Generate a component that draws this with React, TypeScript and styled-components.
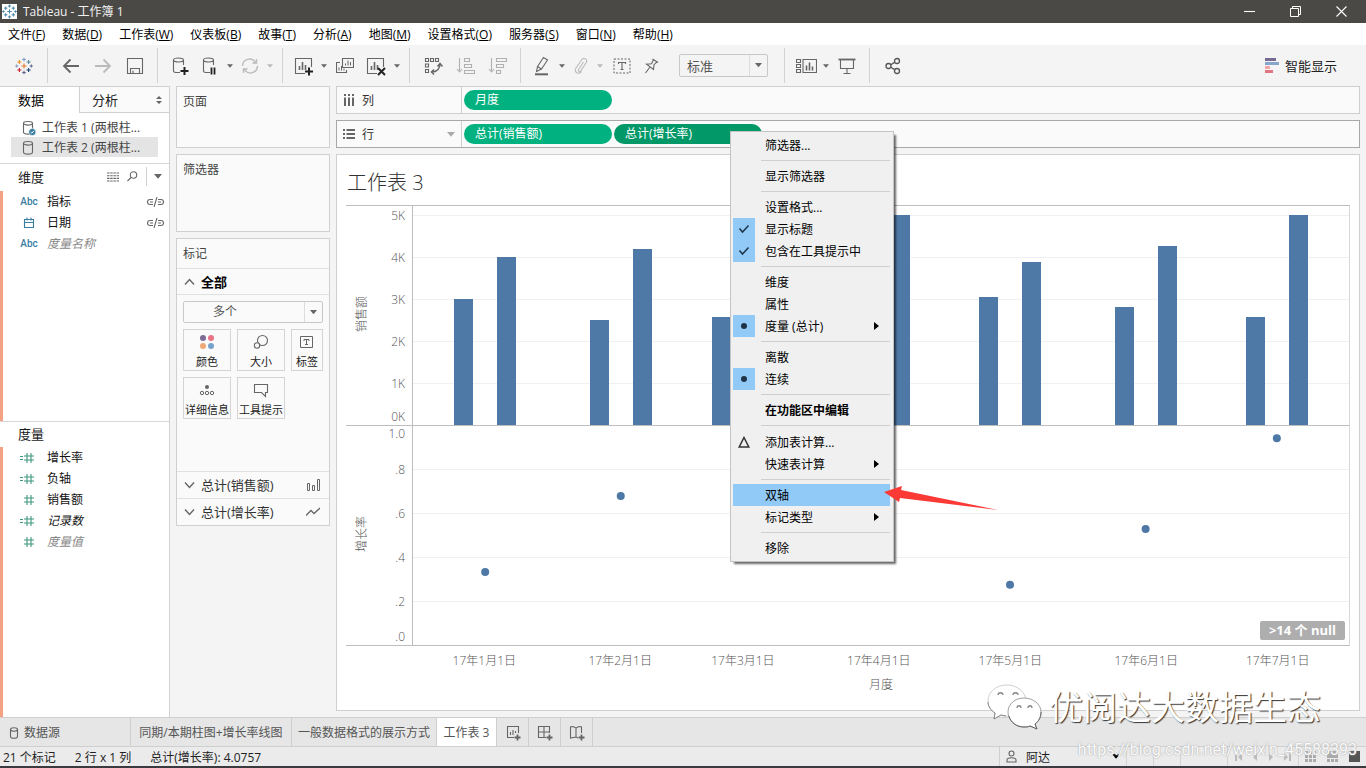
import React from "react";
import styled, { createGlobalStyle, css } from "styled-components";

const Global = createGlobalStyle`
  * { box-sizing: border-box; }
  body { margin: 0; background: #f4f4f4; }
  body, button, select {
    font-family: "Open Sans", "Noto Sans CJK SC", sans-serif;
    font-size: 12px;
    line-height: 20px;
    color: #1a1a1a;
  }
  button { padding: 0; margin: 0; border: 0; background: none; text-align: left; }
  ul { list-style: none; margin: 0; padding: 0; }
  h1, h2, h3 { margin: 0; font-weight: 400; }
  svg { display: block; flex: none; }
`;

/* ---------- frame ---------- */
const Page = styled.div`
  position: relative;
  display: flex;
  flex-direction: column;
  min-height: 100vh;
  overflow: hidden;
`;
const TitleBar = styled.header`
  display: flex;
  align-items: center;
  height: 23px;
  padding: 0 2px;
  background: #4a4946;
  color: #f2f2f2;
`;
const AppTitle = styled.h1`
  flex: 1;
  margin-left: 6px;
  font-size: 12px;
`;
const WindowButton = styled.button`
  display: flex;
  justify-content: center;
  width: 46px;
  color: #fff;
`;
const MenuBar = styled.nav`
  display: flex;
  gap: 17px;
  height: 22px;
  padding-left: 8px;
  background: #fff;
  button { padding-top: 2px; color: #000; white-space: nowrap; }
`;
const Toolbar = styled.div`
  display: flex;
  align-items: center;
  height: 41px;
`;
const ToolGroup = styled.div`
  display: flex;
  align-items: center;
  gap: 3px;
  height: 35px;
  padding: 0 8px;
  border-right: 1px solid #d2d2d2;
  &:last-of-type { border-right: 0; }
`;
const Tool = styled.button<{ $w: number }>`
  display: flex;
  align-items: center;
  justify-content: center;
  width: ${(p) => p.$w}px;
  height: 28px;
`;
const SmartShow = styled.button`
  display: flex;
  align-items: center;
  gap: 6px;
  margin-left: auto;
  margin-right: 29px;
  font-size: 13px;
  color: #222;
`;
const Main = styled.main`
  flex: 1;
  display: flex;
  gap: 6px;
  padding-right: 6px;
`;

/* ---------- drop-downs ---------- */
const SelectBox = styled.span<{ $w?: number; $indent: number }>`
  position: relative;
  display: flex;
  width: ${(p) => (p.$w ? p.$w + "px" : "100%")};
  height: ${(p) => (p.$w ? 23 : 22)}px;
  margin-left: ${(p) => (p.$w ? 12 : 0)}px;
  margin-right: ${(p) => (p.$w ? 8 : 0)}px;
  border: 1px solid #c8c8c8;
  border-radius: 2px;
  select {
    appearance: none;
    flex: 1;
    min-width: 0;
    border: 0;
    padding: 0 0 0 ${(p) => p.$indent}px;
    background: transparent;
    font-size: ${(p) => (p.$w ? 13 : 12)}px;
    color: #555;
  }
`;
const SelectCaret = styled.span`
  position: absolute;
  top: 0;
  bottom: 0;
  right: 0;
  display: flex;
  align-items: center;
  justify-content: center;
  width: 18px;
  border-left: 1px solid #ddd;
  pointer-events: none;
`;

/* ---------- data pane ---------- */
const DataPane = styled.aside`
  display: flex;
  flex-direction: column;
  width: 170px;
  flex: none;
  background: #fff;
  border-top: 1px solid #d0d0d0;
  border-right: 1px solid #d0d0d0;
`;
const PaneTabs = styled.div`
  display: flex;
  height: 26px;
`;
const PaneTab = styled.button<{ $active?: boolean }>`
  display: flex;
  align-items: center;
  justify-content: space-between;
  font-size: 13px;
  width: ${(p) => (p.$active ? "79px" : "auto")};
  flex: ${(p) => (p.$active ? "none" : 1)};
  padding: 0 7px 0 ${(p) => (p.$active ? 18 : 12)}px;
  color: ${(p) => (p.$active ? "#000" : "#222")};
  ${(p) =>
    !p.$active &&
    css`
      background: #fafafa;
      border-left: 1px solid #d0d0d0;
      border-bottom: 1px solid #d0d0d0;
    `}
`;
const Sources = styled.ul`
  padding: 4px 11px 6px;
  border-bottom: 1px solid #d8d8d8;
`;
const Source = styled.li<{ $on?: boolean }>`
  button {
    display: flex;
    align-items: center;
    gap: 5px;
    width: 100%;
    height: 20px;
    padding: 2px 0 0 10px;
    white-space: nowrap;
    color: #444;
    background: ${(p) => (p.$on ? "#e4e4e4" : "transparent")};
  }
`;
const FieldSection = styled.section<{ $grow?: boolean }>`
  display: flex;
  flex-direction: column;
  ${(p) =>
    p.$grow
      ? css`
          flex: 1;
        `
      : css`
          height: 258px;
          border-bottom: 1px solid #d8d8d8;
        `}
`;
const SectionHead = styled.div<{ $h: number }>`
  display: flex;
  align-items: center;
  height: ${(p) => p.$h}px;
  padding: 0 0 2px 18px;
  h2 { flex: 1; font-size: 13px; }
`;
const HeadTools = styled.div`
  display: flex;
  align-items: center;
  button { padding: 4px; }
  button:last-child { margin-left: 4px; padding: 7px; border-left: 1px solid #d0d0d0; }
`;
const Fields = styled.ul`
  flex: 1;
  border-left: 3px solid #f4a184;
`;
const Field = styled.li<{ $dim?: boolean; $italic?: boolean }>`
  display: grid;
  grid-template-columns: 20px 1fr auto;
  column-gap: 8px;
  align-items: center;
  height: 21px;
  padding: 0 5px 0 16px;
  color: ${(p) => (p.$dim ? "#888" : "#111")};
  font-style: ${(p) => (p.$italic ? "italic" : "normal")};
  > :first-child { justify-self: center; }
`;
const Abc = styled.span`
  font-family: Roboto, sans-serif;
  font-size: 10px;
  font-weight: 500;
  font-style: normal;
  color: #3a7da2;
`;

/* ---------- cards ---------- */
const Cards = styled.div`
  display: flex;
  flex-direction: column;
  gap: 6px;
  width: 154px;
  flex: none;
`;
const Card = styled.section<{ $h: number }>`
  min-height: ${(p) => p.$h}px;
  border: 1px solid #d0d0d0;
  background: #fafafa;
  > h2 {
    height: 29px;
    padding: 5px 6px;
    font-size: 12px;
    color: #444;
  }
`;
const MarkRow = styled.button<{ $bold?: boolean }>`
  display: flex;
  align-items: center;
  gap: 6px;
  width: 100%;
  height: 27px;
  padding: 0 9px 0 7px;
  border-top: 1px solid #e0e0e0;
  border-bottom: ${(p) => (p.$bold ? "1px solid #e0e0e0" : "0")};
  font-size: 13px;
  font-weight: ${(p) => (p.$bold ? 700 : 400)};
  color: ${(p) => (p.$bold ? "#000" : "#333")};
  span { flex: 1; }
`;
const MarksBody = styled.div`
  height: 176px;
  padding: 6px;
`;
const MarkGrid = styled.div`
  display: grid;
  grid-template-columns: 48px 48px 32px;
  gap: 6px;
  margin-top: 6px;
`;
const MarkButton = styled.button`
  display: flex;
  flex-direction: column;
  align-items: center;
  justify-content: space-between;
  height: 42px;
  padding-top: 4px;
  border: 1px solid #d4d4d4;
  color: #222;
  white-space: nowrap;
  line-height: 17px;
  font-size: 11px;
`;

/* ---------- shelves ---------- */
const Work = styled.div`
  flex: 1;
  min-width: 0;
  display: flex;
  flex-direction: column;
  gap: 6px;
  padding-bottom: 6px;
`;
const Shelf = styled.div<{ $focus?: boolean }>`
  display: flex;
  height: 28px;
  border: 1px solid ${(p) => (p.$focus ? "#a8a8a8" : "#cfcfcf")};
  background: #fafafa;
`;
const ShelfLabel = styled.div`
  display: flex;
  align-items: center;
  gap: 7px;
  width: 125px;
  flex: none;
  padding: 0 6px;
  border-right: 1px solid #cfcfcf;
  color: #333;
  span { flex: 1; padding-top: 1px; }
`;
const Pills = styled.div`
  display: flex;
  gap: 2px;
  padding: 3px 2px;
`;
const PillSlot = styled.div`
  position: relative;
`;
const Pill = styled.button<{ $on?: boolean }>`
  display: block;
  width: 148px;
  height: 20px;
  padding: 0 11px;
  border-radius: 10px;
  color: #fff;
  background: ${(p) => (p.$on ? "#029868" : "#02b180")};
`;

/* ---------- context menu ---------- */
const Menu = styled.div`
  position: absolute;
  left: 116px;
  top: 7px;
  z-index: 2;
  width: 164px;
  padding: 2px 3px 2px 2px;
  border: 1px solid #c4c4c4;
  background: #f0f0f0;
  box-shadow: 3px 3px 2px -1px rgba(0, 0, 0, 0.6);
`;
const MenuItem = styled.button<{ $hot?: boolean; $bold?: boolean; $tall?: boolean }>`
  display: grid;
  grid-template-columns: 22px 1fr 16px;
  column-gap: 10px;
  align-items: center;
  width: 100%;
  height: ${(p) => (p.$tall ? 23 : 22)}px;
  color: #000;
  white-space: nowrap;
  font-weight: ${(p) => (p.$bold ? 700 : 400)};
  background: ${(p) => (p.$hot ? "#91c9f7" : "transparent")};
`;
const MenuText = styled.span`
  padding-top: 2px;
`;
const MenuMark = styled.span<{ $on: boolean }>`
  display: flex;
  align-items: center;
  justify-content: center;
  height: 22px;
  background: ${(p) => (p.$on ? "#91c9f7" : "transparent")};
`;
const MenuRule = styled.hr`
  height: 1px;
  margin: 4px 0 4px 28px;
  border: 0;
  background: #cfcfcf;
`;
const Pointer = styled.svg`
  position: absolute;
  left: 270px;
  top: 360px;
  z-index: 3;
`;

/* ---------- worksheet ---------- */
const Sheet = styled.section`
  flex: 1;
  padding: 0 9px;
  border: 1px solid #cfcfcf;
  background: #fff;
  h2 {
    height: 50px;
    padding: 14px 1px 0;
    font-size: 20px;
    line-height: 28px;
    font-weight: 300;
    color: #333;
  }
`;
const Chart = styled.div`
  display: grid;
  grid-template-columns: 66px 1fr;
  border-top: 1px solid #bdbdbd;
`;
const AxisCell = styled.div`
  height: 220px;
  border-bottom: 1px solid #bdbdbd;
`;
const PlotCell = styled.div`
  position: relative;
  height: 220px;
  border-left: 1px solid #bdbdbd;
  border-right: 1px solid #d8d8d8;
  border-bottom: 1px solid #bdbdbd;
`;
const DateAxis = styled.div`
  grid-column: 2;
  height: 50px;
`;
const ChartSvg = styled.svg`
  width: 100%;
  height: 100%;
  text { font-size: 12px; font-weight: 300; fill: #555; }
  rect { shape-rendering: crispEdges; }
`;
const NullBadge = styled.button`
  position: absolute;
  right: 4px;
  bottom: 5px;
  height: 19px;
  padding: 0 9px;
  border-radius: 2px;
  background: #aeaeae;
  color: #fff;
  font-size: 13px;
  font-weight: 700;
  line-height: 19px;
`;

/* ---------- footer ---------- */
const SheetTabs = styled.div`
  display: flex;
  height: 30px;
  border-top: 1px solid #cfcfcf;
  border-bottom: 1px solid #cfcfcf;
  background: #e6e6e6;
`;
const SheetTab = styled.button<{ $w: number; $active?: boolean; $start?: boolean }>`
  display: flex;
  align-items: center;
  justify-content: ${(p) => (p.$start ? "flex-start" : "center")};
  gap: 5px;
  width: ${(p) => p.$w}px;
  padding-top: 2px;
  padding-left: ${(p) => (p.$start ? 9 : 0)}px;
  border-right: 1px solid #cfcfcf;
  white-space: nowrap;
  color: #555;
  background: ${(p) => (p.$active ? "#fff" : "transparent")};
`;
const StatusBar = styled.footer`
  display: flex;
  align-items: center;
  height: 21px;
  padding-left: 3px;
  border-bottom: 2px solid #3b3b3f;
  background: #ebebeb;
  color: #222;
`;
const StatusText = styled.span`
  padding: 2px 19px 0 0;
  white-space: nowrap;
`;
const StatusRight = styled.div`
  display: flex;
  align-self: stretch;
  margin-left: auto;
`;
const StatusCell = styled.button<{ $w: number }>`
  display: flex;
  align-items: center;
  justify-content: space-around;
  width: ${(p) => p.$w}px;
  border-left: 1px solid #d4d4d4;
`;
const UserCell = styled.button`
  display: flex;
  align-items: center;
  gap: 9px;
  width: 127px;
  padding: 0 6px;
  border-left: 1px solid #d0d0d0;
  span { flex: 1; padding-top: 2px; }
`;

/* ---------- watermarks ---------- */
const Brand = styled.div`
  position: absolute;
  right: 45px;
  bottom: 36px;
  z-index: 4;
  display: flex;
  align-items: center;
  gap: 6px;
  font-size: 34px;
  line-height: 50px;
  color: #fff;
  text-shadow: 1px 1px 1px #333;
  pointer-events: none;
`;
const Url = styled.div`
  position: absolute;
  right: 9px;
  bottom: 8px;
  z-index: 4;
  font-family: Roboto, sans-serif;
  font-size: 16px;
  color: #fafafa;
  text-shadow: 0 0 1px #aaa, 0 0 2px #bbb;
  pointer-events: none;
`;

/* ---------- icons ---------- */
const Caret = ({ c = "#666", s = 6 }: { c?: string; s?: number }) => (
  <svg width={s} height={s / 2 + 1} viewBox="0 0 8 5"><path d="M0 0h8L4 4.8z" fill={c} /></svg>
);
const plus = (x: number, y: number, r: number) => `M${x - r} ${y}h${2 * r}M${x} ${y - r}v${2 * r}`;
const Mark = ({ size, mono }: { size: number; mono?: boolean }) => {
  const parts: [number, number, number, string][] = [
    [9, 9, 2.6, "#e8762c"], [9, 2.5, 1.8, "#7b9bc0"], [9, 15.5, 1.8, "#59658f"],
    [4.4, 5, 2.1, "#eb912c"], [13.6, 5, 2.1, "#59879b"], [4.4, 13, 2.1, "#c72035"],
    [13.6, 13, 2.1, "#1f457e"], [1.7, 9, 1.5, "#7b9bc0"], [16.3, 9, 1.5, "#59658f"],
  ];
  return (
    <svg width={size} height={size} viewBox="0 0 18 18">
      {mono && <rect width="18" height="18" fill="#fff" />}
      {parts.map(([x, y, r, c], i) => (
        <path key={i} d={plus(x, y, r)} stroke={mono ? "#3d7fa5" : c} strokeWidth="1.1" />
      ))}
    </svg>
  );
};
const G = ({ w = 20, h = 20, c = "#666", sw = 1.1, children }: {
  w?: number; h?: number; c?: string; sw?: number; children: React.ReactNode;
}) => (
  <svg width={w} height={h} viewBox={`0 0 ${w} ${h}`} fill="none" stroke={c} strokeWidth={sw}>{children}</svg>
);
const Cylinder = ({ badge }: { badge?: boolean }) => (
  <G w={16} h={16}>
    <ellipse cx="7" cy="3.3" rx="4.5" ry="1.8" />
    <path d="M2.5 3.3v9c0 1 2 1.800 4.500 1.800s4.500-.8 4.500-1.800v-9" />
    {badge && <><circle cx="11.3" cy="12" r="3.6" fill="#3a7da2" stroke="#fff" strokeWidth=".6" /><path d="M9.7 12l1.2 1.2 2-2.4" stroke="#fff" strokeWidth="1" /></>}
  </G>
);
const cyl = "M10 16.500H7.500C5 16.500 3.500 16 3.500 15V4M3.500 4c0-2.600 10-2.600 10 0s-10 2.600-10 0M13.500 4v5";
const bars = "M5.500 14v-4M8.500 14V6M11.500 14V9";
const SheetIcon = ({ children }: { children?: React.ReactNode }) => (
  <G>
    <path d="M11 17.500H1.500v-15h16V11" />
    <path d={bars} strokeWidth="1.6" />
    {children}
  </G>
);
const Hash = ({ calc }: { calc?: boolean }) => (
  <G w={20} h={12} c="#3f977d" sw={1.1}>
    <path d="M5 4h10M5 8h10M8 1v10M12 1v10" />
    {calc && <path d="M1 4.500h3M1 7.500h3" />}
  </G>
);
const LinkIcon = () => (
  <G w={17} h={10} sw={1.1}><path d="M6 2.500H3a2.200 2.200 0 0 0 0 5h3M3 5h3M11 2.500h3a2.200 2.200 0 0 1 0 5h-3M11 5h3M10 0L7 10" /></G>
);
const Chevron = ({ up }: { up?: boolean }) => (
  <G w={11} h={8} sw={1.4}><path d={up ? "M1 6.500l4.500-5 4.500 5" : "M1 1.500l4.500 5 4.500-5"} /></G>
);
const SortIcon = ({ asc }: { asc?: boolean }) => (
  <G c="#b0b0b0">
    <path d="M3.500 2v14M1 13l2.500 3L6 13" />
    {asc
      ? <path d="M8.500 2.500h5v3h-5zM8.500 8.500h7v3h-7zM8.500 14.500h10v3h-10z" />
      : <path d="M8.500 2.500h10v3h-10zM8.500 8.500h7v3h-7zM8.500 14.500h4v3h-4z" />}
  </G>
);

/* ---------- data ---------- */
const menus: [string, string][] = [
  ["文件", "F"], ["数据", "D"], ["工作表", "W"], ["仪表板", "B"], ["故事", "T"], ["分析", "A"],
  ["地图", "M"], ["设置格式", "O"], ["服务器", "S"], ["窗口", "N"], ["帮助", "H"],
];
type Entry = { label: string; mark?: "check" | "dot" | "delta"; sub?: boolean; hot?: boolean; bold?: boolean };
const contextMenu: Entry[][] = [
  [{ label: "筛选器..." }],
  [{ label: "显示筛选器" }],
  [{ label: "设置格式..." }, { label: "显示标题", mark: "check" }, { label: "包含在工具提示中", mark: "check" }],
  [{ label: "维度" }, { label: "属性" }, { label: "度量 (总计)", mark: "dot", sub: true }],
  [{ label: "离散" }, { label: "连续", mark: "dot" }],
  [{ label: "在功能区中编辑", bold: true }],
  [{ label: "添加表计算...", mark: "delta" }, { label: "快速表计算", sub: true }],
  [{ label: "双轴", hot: true }, { label: "标记类型", sub: true }],
  [{ label: "移除" }],
];
/* day of year, previous and current sales in thousands, growth rate */
const months = [
  { day: 0, a: 3.0, b: 4.0, rate: 0.333 },
  { day: 31, a: 2.5, b: 4.2, rate: 0.68 },
  { day: 59, a: 2.57, b: 3.6, rate: 0.4 },
  { day: 90, a: 3.2, b: 5.0, rate: 0.56 },
  { day: 120, a: 3.05, b: 3.88, rate: 0.275 },
  { day: 151, a: 2.8, b: 4.26, rate: 0.53 },
  { day: 181, a: 2.57, b: 5.0, rate: 0.944 },
];
const dayX = (d: number) => `${(((d + 16.5) / 214) * 100).toFixed(3)}%`;
const PANE = 219;

const SalesPane = () => (
  <>
    <AxisCell>
      <ChartSvg aria-label="销售额">
        {[0, 1, 2, 3, 4, 5].map((k) => (
          <text key={k} x="59" y={k ? PANE - k * 42 + 5 : PANE - 4} textAnchor="end">{k}K</text>
        ))}
        <text transform="translate(20 108) rotate(-90)" textAnchor="middle">销售额</text>
      </ChartSvg>
    </AxisCell>
    <PlotCell>
      <ChartSvg>
        {[1, 2, 3, 4, 5].map((k) => (
          <rect key={k} y={PANE - k * 42} width="100%" height="1" fill="#f0f0f0" />
        ))}
        {months.map((m) => (
          <svg key={m.day} x={dayX(m.day)} overflow="visible">
            <rect x="-31" y={Math.round(PANE - m.a * 42)} width="19" height={Math.round(m.a * 42)} fill="#4e79a7" />
            <rect x="12" y={Math.round(PANE - m.b * 42)} width="19" height={Math.round(m.b * 42)} fill="#4e79a7" />
          </svg>
        ))}
      </ChartSvg>
    </PlotCell>
  </>
);
const GrowthPane = () => (
  <>
    <AxisCell>
      <ChartSvg aria-label="增长率">
        {[".0", ".2", ".4", ".6", ".8", "1.0"].map((t, i) => (
          <text key={t} x="59" y={i === 0 ? PANE - 4 : i === 5 ? 12 : PANE - i * 44 + 5} textAnchor="end">{t}</text>
        ))}
        <text transform="translate(20 108) rotate(-90)" textAnchor="middle">增长率</text>
      </ChartSvg>
    </AxisCell>
    <PlotCell>
      <ChartSvg>
        {[1, 2, 3, 4].map((k) => (
          <rect key={k} y={PANE - k * 44} width="100%" height="1" fill="#f0f0f0" />
        ))}
        {months.map((m) => (
          <circle key={m.day} cx={dayX(m.day)} cy={PANE - m.rate * 219} r="4" fill="#4e79a7" />
        ))}
      </ChartSvg>
      <NullBadge>&gt;14 个 null</NullBadge>
    </PlotCell>
  </>
);

const ContextMenu = () => (
  <Menu role="menu">
    {contextMenu.map((group, g) => (
      <React.Fragment key={g}>
        {g > 0 && <MenuRule />}
        {group.map((e) => (
          <MenuItem key={e.label} role="menuitem" $hot={e.hot} $bold={e.bold} $tall={e.mark === "delta"}>
            <MenuMark $on={e.mark === "check" || e.mark === "dot"}>
              {e.mark === "check" && <G w={12} h={10} c="#1f3547" sw={1.5}><path d="M1.500 4.500l3 3.500 6-6.500" /></G>}
              {e.mark === "dot" && <G w={8} h={8}><circle cx="4" cy="4" r="3" fill="#1f3547" stroke="none" /></G>}
              {e.mark === "delta" && <G w={12} h={12} c="#333" sw={1.5}><path d="M6 1.500L10.800 11H1.200z" /></G>}
            </MenuMark>
            <MenuText>{e.label}</MenuText>
            {e.sub && <svg width="5" height="8"><path d="M0 0l5 4-5 4z" fill="#000" /></svg>}
          </MenuItem>
        ))}
      </React.Fragment>
    ))}
  </Menu>
);

export default function App() {
  return (
    <Page>
      <Global />
      <TitleBar>
        <Mark size={15} mono />
        <AppTitle>Tableau - 工作簿 1</AppTitle>
        <WindowButton aria-label="最小化"><G w={11} h={11} c="#fff"><path d="M0 5.500h11" /></G></WindowButton>
        <WindowButton aria-label="还原"><G w={11} h={11} c="#fff" sw={1}><path d="M.5 2.500h8v8h-8zM2.500 2.500v-2h8v8h-2" /></G></WindowButton>
        <WindowButton aria-label="关闭"><G w={11} h={11} c="#fff"><path d="M.5.500l10 10M10.500.500l-10 10" /></G></WindowButton>
      </TitleBar>
      <MenuBar>
        {menus.map(([t, k]) => <button key={t}>{t}(<u>{k}</u>)</button>)}
      </MenuBar>

      <Toolbar>
        <ToolGroup>
          <Tool $w={31} aria-label="起始页"><Mark size={18} /></Tool>
        </ToolGroup>
        <ToolGroup>
          <Tool $w={29} aria-label="撤消"><G sw={1.8}><path d="M18 10H3M9.500 3.500L3 10l6.500 6.500" /></G></Tool>
          <Tool $w={29} aria-label="重做"><G sw={1.8} c="#bbb"><path d="M2 10h15M10.500 3.500L17 10l-6.500 6.500" /></G></Tool>
          <Tool $w={29} aria-label="保存"><G><path d="M2.500 2.500h15v15h-15zM5.500 17v-4.500h9V17M8 17v-2.500" /></G></Tool>
        </ToolGroup>
        <ToolGroup>
          <Tool $w={28} aria-label="新建数据源"><G><path d={cyl} /><path d="M14.500 11v8M10.500 15h8" stroke="#222" strokeWidth="2" /></G></Tool>
          <Tool $w={26} aria-label="暂停自动更新"><G><path d={cyl} /><path d="M11.500 11.500v7M14.500 11.500v7" stroke="#222" strokeWidth="1.800" /></G></Tool>
          <Tool $w={8} aria-label="更新选项"><Caret /></Tool>
          <Tool $w={26} aria-label="运行更新"><G c="#bbb" sw={1.4}><path d="M2.500 10a7 7 0 0 1 13-3.500M17.500 10a7 7 0 0 1-13 3.500M16.500 3v4h-4M3.500 17v-4h4" /></G></Tool>
          <Tool $w={8} aria-label="运行选项"><Caret c="#bbb" /></Tool>
        </ToolGroup>
        <ToolGroup>
          <Tool $w={26} aria-label="新建工作表"><SheetIcon><path d="M15 11.500v8M11 15.500h8" stroke="#222" strokeWidth="2" /></SheetIcon></Tool>
          <Tool $w={8} aria-label="新建选项"><Caret /></Tool>
          <Tool $w={28} aria-label="复制"><G w={18}><path d="M6.500 2.500h11v9h-11zM4 6.500H.500v10h10V14" /><path d="M9.500 9.500v-2M12 9.500v-5M14.500 9.500V6M3 14.500v-3M5.500 14.500V10M8 14.500v-2" strokeWidth="1" /></G></Tool>
          <Tool $w={28} aria-label="清除工作表"><SheetIcon><path d="M12 12l7 7M19 12l-7 7" stroke="#222" strokeWidth="2" /></SheetIcon></Tool>
          <Tool $w={8} aria-label="清除选项"><Caret /></Tool>
        </ToolGroup>
        <ToolGroup>
          <Tool $w={29} aria-label="交换行和列"><G><path d="M2.500 2.500h3v3h-3zM7.500 2.500h3v3h-3zM12.500 2.500h3v3h-3zM2.500 8h3v3h-3zM2.500 13.500h3v3h-3z" /><path d="M17 7.500c0 5-3 8.500-8.500 8.500M14.500 10.500L17 7.500l2.500 3M11 13.500L8.500 16l2.500 2.500" strokeWidth="1.500" /></G></Tool>
          <Tool $w={31} aria-label="升序"><SortIcon asc /></Tool>
          <Tool $w={28} aria-label="降序"><SortIcon /></Tool>
        </ToolGroup>
        <ToolGroup>
          <Tool $w={26} aria-label="突出显示"><G><path d="M3 18.300h13" strokeWidth="2" /><path d="M5.500 10.500l6-9 4 2.500-6 9zM5.500 10.500L4.500 15.500l5-2.500" /></G></Tool>
          <Tool $w={8} aria-label="突出显示选项"><Caret /></Tool>
          <Tool $w={24} aria-label="组"><G c="#bbb"><path d="M12.500 6l-5 7.500c-1 1.800 1.300 3 2.300 1.400l5.500-8.400c1.800-3-2.500-5.800-4.500-2.800L5 12c-2.500 4 3 7.500 5.500 3.500" /></G></Tool>
          <Tool $w={8} aria-label="组选项"><Caret c="#bbb" /></Tool>
          <Tool $w={29} aria-label="显示标记标签"><G><rect x="2" y="3" width="16" height="14" strokeDasharray="2 1.500" strokeWidth="1" /><path d="M6.500 8V6.500h7V8M10 6.500v7M8.500 13.500h3" /></G></Tool>
          <Tool $w={25} aria-label="固定轴"><G><path d="M10.500 3l5.500 3.500M11.500 3.700L9.500 7.700 4.500 8.200l7 5.300.500-4.800 3-2.800M8 11l-4.500 6" /></G></Tool>
          <SelectBox $w={89} $indent={7}>
            <select aria-label="适合"><option>标准</option></select>
            <SelectCaret><Caret s={7} /></SelectCaret>
          </SelectBox>
        </ToolGroup>
        <ToolGroup>
          <Tool $w={26} aria-label="显示卡"><G w={21}><path d="M.5 3.500h4v3h-4zM.5 8.500h4v3h-4zM.5 13.500h4v3h-4zM7 3.500h13.500v13H7z" /><path d="M10.500 14.500v-5M13.500 14.500v-8M16.500 14.500v-4" strokeWidth="1.600" /></G></Tool>
          <Tool $w={8} aria-label="显示卡选项"><Caret /></Tool>
          <Tool $w={28} aria-label="演示模式"><G><path d="M1.500 3.500h17" strokeWidth="1.800" /><path d="M3.500 4v8.500h13V4M10 12.500v5M6.500 17.500h7" /></G></Tool>
        </ToolGroup>
        <ToolGroup>
          <Tool $w={30} aria-label="共享"><G c="#555" sw={1.3}><circle cx="5.500" cy="10" r="2.500" /><circle cx="14" cy="5" r="2.500" /><circle cx="14" cy="15" r="2.500" /><path d="M7.700 8.800l4-2.400M7.700 11.200l4 2.400" /></G></Tool>
        </ToolGroup>
        <SmartShow>
          <svg width="14" height="15"><path fill="#766a92" d="M0 0h11v3H0z" /><path fill="#85a5cc" d="M0 4h14v3H0z" /><path fill="#f0a6a6" d="M0 8h5v3H0z" /><path fill="#e17680" d="M0 12h8v3H0z" /></svg>
          智能显示
        </SmartShow>
      </Toolbar>

      <Main>
        <DataPane>
          <PaneTabs>
            <PaneTab $active>数据</PaneTab>
            <PaneTab>分析<svg width="6" height="8"><path d="M3 0l3 3H0zM3 8l3-3H0z" fill="#666" /></svg></PaneTab>
          </PaneTabs>
          <Sources>
            <Source><button><Cylinder badge />工作表 1 (两根柱...</button></Source>
            <Source $on><button><Cylinder />工作表 2 (两根柱...</button></Source>
          </Sources>
          <FieldSection>
            <SectionHead $h={27}>
              <h2>维度</h2>
              <HeadTools>
                <button aria-label="查看数据"><G w={12} h={10}><path d="M0 1h12M0 3.700h12M0 6.400h12M0 9h12" strokeDasharray="2.500 .7" /></G></button>
                <button aria-label="查找字段"><G w={11} h={11}><circle cx="6.500" cy="4" r="3.200" /><path d="M4 6.500L.500 10" /></G></button>
                <button aria-label="字段选项"><Caret s={8} /></button>
              </HeadTools>
            </SectionHead>
            <Fields>
              <Field><Abc>Abc</Abc><span>指标</span><LinkIcon /></Field>
              <Field><G w={12} h={12} c="#3a7da2"><path d="M1.500 2.500h9v8h-9zM1.500 5.500h9M4 .500v3M8 .500v3" /></G><span>日期</span><LinkIcon /></Field>
              <Field $dim $italic><Abc>Abc</Abc><span>度量名称</span></Field>
            </Fields>
          </FieldSection>
          <FieldSection $grow>
            <SectionHead $h={25}><h2>度量</h2></SectionHead>
            <Fields>
              <Field><Hash calc /><span>增长率</span></Field>
              <Field><Hash calc /><span>负轴</span></Field>
              <Field><Hash /><span>销售额</span></Field>
              <Field $italic><Hash calc /><span>记录数</span></Field>
              <Field $dim $italic><Hash /><span>度量值</span></Field>
            </Fields>
          </FieldSection>
        </DataPane>

        <Cards>
          <Card $h={62}><h2>页面</h2></Card>
          <Card $h={78}><h2>筛选器</h2></Card>
          <Card $h={288}>
            <h2>标记</h2>
            <MarkRow $bold><Chevron up /><span>全部</span></MarkRow>
            <MarksBody>
              <SelectBox $indent={29}>
                <select aria-label="标记类型"><option>多个</option></select>
                <SelectCaret><Caret s={7} /></SelectCaret>
              </SelectBox>
              <MarkGrid>
                <MarkButton><svg width="16" height="16"><circle cx="4" cy="4" r="3" fill="#7c6b96" /><circle cx="12" cy="4" r="3" fill="#ea7385" /><circle cx="4" cy="12" r="3" fill="#efa875" /><circle cx="12" cy="12" r="3" fill="#76a1cb" /></svg>颜色</MarkButton>
                <MarkButton><G w={16} h={16}><circle cx="9.500" cy="6.500" r="5" /><circle cx="4" cy="11.500" r="2.700" fill="#fafafa" /></G>大小</MarkButton>
                <MarkButton><G w={16} h={16} sw={1}><path d="M1.500 2.500h12v11h-12zM5 7V5.500h5V7M7.500 5.500v5M6 10.500h3" /></G>标签</MarkButton>
                <MarkButton><G w={16} h={16} sw={1}><circle cx="8" cy="5" r="2" fill="#666" stroke="none" /><circle cx="3" cy="11" r="1.700" /><circle cx="8" cy="11" r="1.700" /><circle cx="13" cy="11" r="1.700" /></G>详细信息</MarkButton>
                <MarkButton><G w={16} h={16}><path d="M1.500 2.500h13v8h-2v4l-4-4h-7z" /></G>工具提示</MarkButton>
              </MarkGrid>
            </MarksBody>
            <MarkRow><Chevron /><span>总计(销售额)</span><G w={14} h={14} sw={1}><path d="M1.500 5.500h2v7h-2zM6.500 7.500h2v5h-2zM11.500 1.500h2v11h-2z" /></G></MarkRow>
            <MarkRow><Chevron /><span>总计(增长率)</span><G w={14} h={10} sw={1.300}><path d="M0 8.500l5-5 3 3L14 1" /></G></MarkRow>
          </Card>
        </Cards>

        <Work>
          <Shelf>
            <ShelfLabel>
              <G w={12} h={13} sw={2}><path d="M2 0v2M6 0v2M10 0v2M2 3.500V12M6 3.500V12M10 3.500V12" /></G>
              <span>列</span>
            </ShelfLabel>
            <Pills><Pill>月度</Pill></Pills>
          </Shelf>
          <Shelf $focus>
            <ShelfLabel>
              <G w={12} h={12} sw={2}><path d="M0 2h2M0 6h2M0 10h2M3.500 2H12M3.500 6H12M3.500 10H12" /></G>
              <span>行</span>
              <Caret c="#aaa" s={8} />
            </ShelfLabel>
            <Pills>
              <Pill>总计(销售额)</Pill>
              <PillSlot>
                <Pill $on>总计(增长率)</Pill>
                <ContextMenu />
                <Pointer width="116" height="28"><path d="M0 8L18 2l-1 4 97 20-98-12-1 4z" fill="#fb3a35" /></Pointer>
              </PillSlot>
            </Pills>
          </Shelf>
          <Sheet>
            <h2>工作表 3</h2>
            <Chart>
              <SalesPane />
              <GrowthPane />
              <DateAxis>
                <ChartSvg>
                  {months.map((m, i) => (
                    <text key={m.day} x={dayX(m.day)} y="19" textAnchor="middle">17年{i + 1}月1日</text>
                  ))}
                  <text x="50%" y="43" textAnchor="middle">月度</text>
                </ChartSvg>
              </DateAxis>
            </Chart>
          </Sheet>
        </Work>
      </Main>

      <SheetTabs>
        <SheetTab $w={131} $start><G w={10} h={12}><ellipse cx="5" cy="2.500" rx="3.500" ry="1.700" /><path d="M1.500 2.500v7c0 2.300 7 2.300 7 0v-7" /></G>数据源</SheetTab>
        <SheetTab $w={161}>同期/本期柱图+增长率线图</SheetTab>
        <SheetTab $w={145}>一般数据格式的展示方式</SheetTab>
        <SheetTab $w={60} $active>工作表 3</SheetTab>
        <SheetTab $w={32} aria-label="新建工作表"><G w={16} h={16}><path d="M9 12.500H2.500v-11h11V8M5.500 10V7M8 10V5M10.500 8V6" /><path d="M12.500 9.500v6M9.500 12.500h6" strokeWidth="1.800" /></G></SheetTab>
        <SheetTab $w={32} aria-label="新建仪表板"><G w={16} h={16}><path d="M9 12.500H1.500v-11h11V8M1.500 7h11M7 1.500v11" /><path d="M12.500 9.500v6M9.500 12.500h6" strokeWidth="1.800" /></G></SheetTab>
        <SheetTab $w={32} aria-label="新建故事"><G w={16} h={16}><path d="M9 13l-2-1-5.500 1v-11l2.500-.500 3 1.500 3-1.500 2.500.500V8M7 3v9" /><path d="M12.500 9.500v6M9.500 12.500h6" strokeWidth="1.800" /></G></SheetTab>
      </SheetTabs>
      <StatusBar>
        <StatusText>21 个标记</StatusText>
        <StatusText>2 行 x 1 列</StatusText>
        <StatusText>总计(增长率): 4.0757</StatusText>
        <StatusRight>
          <UserCell>
            <G w={11} h={13}><circle cx="5.500" cy="3.500" r="2.500" /><path d="M1 12V10c0-3 9-3 9 0v2z" /></G>
            <span>阿达</span>
            <Caret c="#000" s={8} />
          </UserCell>
          <StatusCell $w={27} aria-label="筛选" />
          <StatusCell $w={27} aria-label="选择" />
          <StatusCell $w={47} aria-label="状态" />
          <StatusCell $w={71} aria-label="浏览">
            <svg width="56" height="8"><path fill="#bbb" d="M0 0h2v8H0zM7 0v8L3 4zM22 0v8l-4-4zM34 0v8l4-4zM49 0v8l4-4zM54 0h2v8h-2z" /></svg>
          </StatusCell>
          <StatusCell $w={68} aria-label="视图">
            <svg width="11" height="11"><path fill="#aaa" d="M0 0h3v3H0zM4 0h3v3H4zM8 0h3v3H8zM0 4h3v3H0zM4 4h3v3H4zM8 4h3v3H8zM0 8h3v3H0zM4 8h3v3H4zM8 8h3v3H8z" /></svg>
            <svg width="11" height="11"><path fill="#aaa" d="M0 0h11v7H0zM0 8h3v3H0zM4 8h3v3H4zM8 8h3v3H8z" /></svg>
            <svg width="11" height="11"><path fill="#555" d="M0 0h11v11H0z" /></svg>
          </StatusCell>
        </StatusRight>
      </StatusBar>

      <Brand>
        <svg width="56" height="46" viewBox="0 0 56 46" fill="#fff" strokeWidth="1">
          <path d="M20 1C9 1 1 8 1 17c0 5 3 9 7 12l-1 6 7-4c2 1 5 1 7 1 10 0 18-7 18-15S31 1 20 1z" stroke="#d0d0d0" />
          <path d="M1 18c0 5 3 8 7 11l-1 6 7-4 5 1" stroke="#888" fill="none" />
          <path d="M37 14c-9 0-16 6-16 14s7 15 16 15c2 0 4 0 6-1l7 3-2-5c4-3 6-7 6-12 0-8-8-14-17-14z" stroke="#a0a0a0" />
          <path d="M22 32c2 7 8 11 15 11 2 0 4 0 6-1l7 3-2-5c4-3 6-7 6-12" stroke="#666" fill="none" />
          <path d="M11 11c0-3 5-3 5 0M26 11c0-3 5-3 5 0M30 24c0-3 4-3 4 0M41 24c0-3 4-3 4 0" fill="none" stroke="#888" strokeWidth="1.300" />
        </svg>
        优阅达大数据生态
      </Brand>
      <Url>https://blog.csdn.net/weixin_45588393</Url>
    </Page>
  );
}
